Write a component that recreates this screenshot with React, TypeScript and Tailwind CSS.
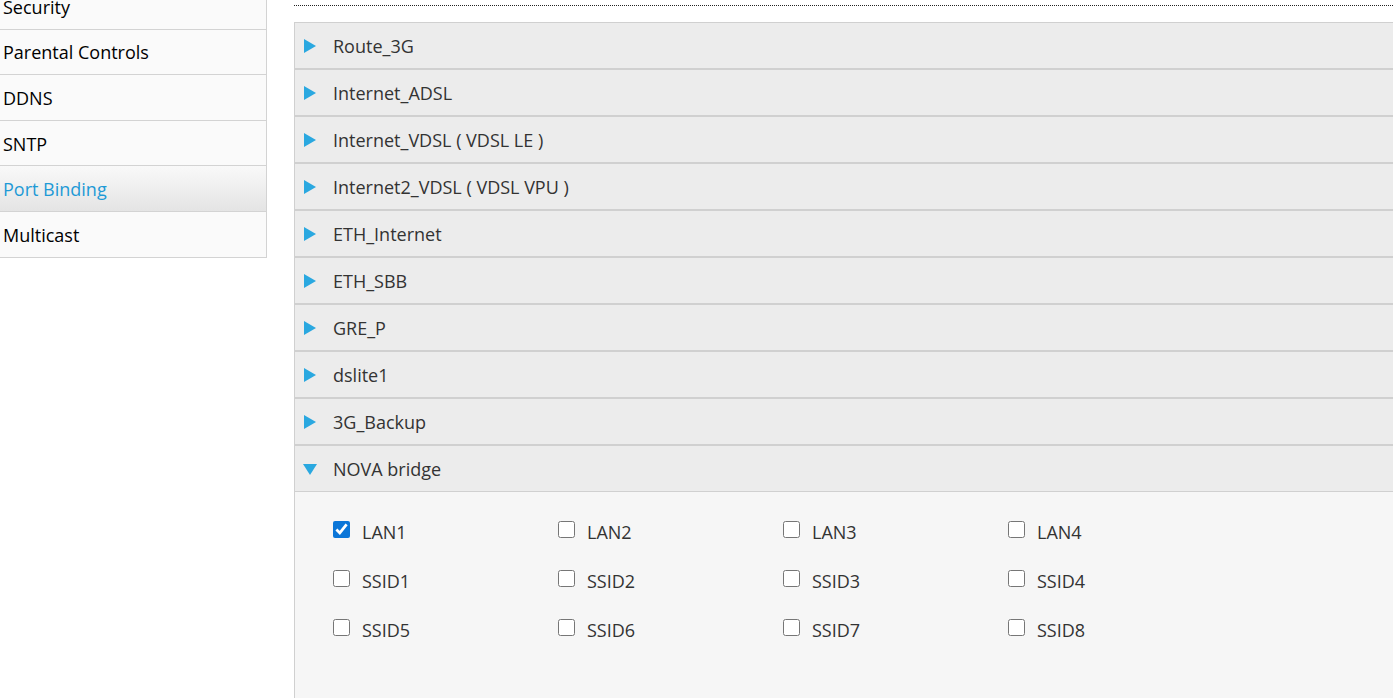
import { useState } from "react";

const menu = ["Security", "Parental Controls", "DDNS", "SNTP", "Port Binding", "Multicast"];

const wans = [
  "Route_3G",
  "Internet_ADSL",
  "Internet_VDSL ( VDSL LE )",
  "Internet2_VDSL ( VDSL VPU )",
  "ETH_Internet",
  "ETH_SBB",
  "GRE_P",
  "dslite1",
  "3G_Backup",
  "NOVA bridge",
];

const ports = ["LAN1", "LAN2", "LAN3", "LAN4", "SSID1", "SSID2", "SSID3", "SSID4", "SSID5", "SSID6", "SSID7", "SSID8"];

function Arrow({ open }: { open: boolean }) {
  return (
    <svg width="14" height="14" viewBox="0 0 14 14" className="shrink-0">
      {open ? <polygon points="0,2 14,2 7,13" fill="#2aa8e0" /> : <polygon points="1,0 13,7 1,14" fill="#2aa8e0" />}
    </svg>
  );
}

export default function App() {
  const [checked, setChecked] = useState<Record<string, boolean>>({ LAN1: true });

  return (
    <div className="flex h-[698px] overflow-hidden bg-white text-[18px] font-['Open_Sans','Noto_Sans',sans-serif]">
      <div className="w-[267px] shrink-0 -mt-[16px]">
        {menu.map((m) => {
          const active = m === "Port Binding";
          return (
            <div
              key={m}
              className={
                "h-[45.6px] flex items-center pl-[3px] pt-[2px] border-b border-r border-[#d3d3d3] " +
                (active ? "bg-gradient-to-b from-[#f9f9f9] to-[#e4e4e4] text-[#1e9ad6]" : "bg-[#fafafa] text-black")
              }
            >
              {m}
            </div>
          );
        })}
      </div>

      <div className="flex-1 ml-[27px] flex flex-col">
        <div className="h-[6px] border-b border-dotted border-[#222]" />
        <div className="mt-[16px] flex-1 flex flex-col border-l border-[#d0d0d0]">
          {wans.map((w) => {
            const open = w === "NOVA bridge";
            return (
              <div
                key={w}
                className="h-[47px] flex items-center gap-[16px] pl-[8px] pt-[1px] bg-[#ececec] border-y border-[#d0d0d0] text-[#333]"
              >
                <Arrow open={open} />
                <span>{w}</span>
              </div>
            );
          })}
          <div className="flex-1 bg-[#f6f6f6] pl-[38px] pt-[31px]">
            <div className="grid grid-cols-[225px_225px_225px_225px] gap-y-[31px]">
              {ports.map((p) => (
                <label key={p} className="flex items-center gap-[12px] text-[#333] h-[18px]">
                  <input
                    type="checkbox"
                    checked={!!checked[p]}
                    onChange={() => setChecked({ ...checked, [p]: !checked[p] })}
                    className="w-[17px] h-[17px] m-0 accent-[#0b76d8] -mt-[6px]"
                  />
                  <span>{p}</span>
                </label>
              ))}
            </div>
          </div>
        </div>
      </div>
    </div>
  );
}
